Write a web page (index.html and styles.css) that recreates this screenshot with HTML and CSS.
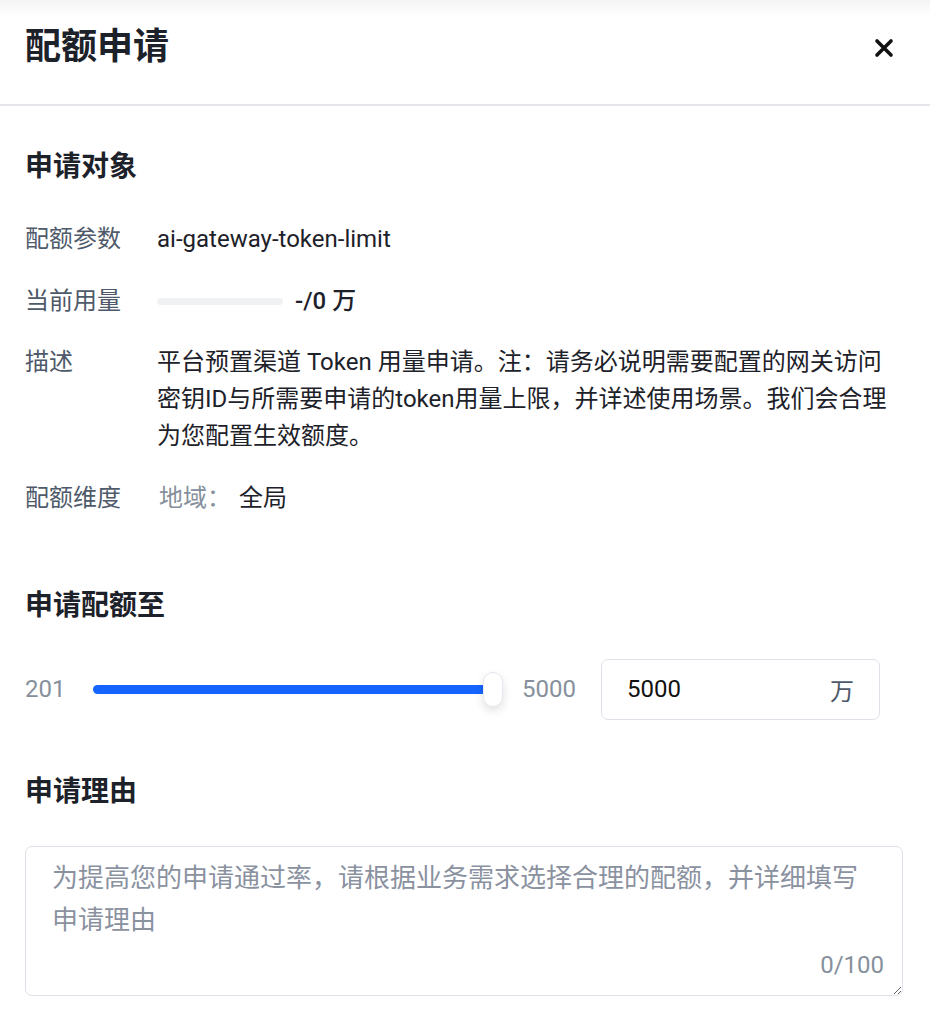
FILE: index.html
```html
<!DOCTYPE html>
<html lang="zh-CN">
<head>
<meta charset="utf-8">
<title>配额申请</title>
<link rel="stylesheet" href="styles.css">
</head>
<body>
<div class="dialog">
  <header class="dialog-header">
    <h1 class="dialog-title">配额申请</h1>
    <button class="close-btn" aria-label="关闭">
      <svg width="20" height="20" viewBox="0 0 20 20"><path d="M3 3L17 17M17 3L3 17" stroke="#111" stroke-width="3.6" stroke-linecap="round"/></svg>
    </button>
  </header>
  <main class="dialog-body">
    <h2 class="section-title first">申请对象</h2>
    <div class="info-rows">
      <div class="info-row">
        <div class="info-label">配额参数</div>
        <div class="info-value">ai-gateway-token-limit</div>
      </div>
      <div class="info-row">
        <div class="info-label">当前用量</div>
        <div class="info-value usage">
          <span class="usage-bar"></span>
          <span class="usage-text">-/0 万</span>
        </div>
      </div>
      <div class="info-row">
        <div class="info-label">描述</div>
        <div class="info-value desc">平台预置渠道 Token 用量申请。注：请务必说明需要配置的网关访问密钥ID与所需要申请的token用量上限，并详述使用场景。我们会合理为您配置生效额度。</div>
      </div>
      <div class="info-row">
        <div class="info-label">配额维度</div>
        <div class="info-value"><span class="dim-key">地域：</span>全局</div>
      </div>
    </div>

    <h2 class="section-title second">申请配额至</h2>
    <div class="slider-row">
      <span class="slider-min">201</span>
      <div class="slider">
        <div class="slider-track"></div>
        <div class="slider-thumb"></div>
      </div>
      <span class="slider-max">5000</span>
      <div class="num-input">
        <span class="num-value">5000</span>
        <span class="num-unit">万</span>
      </div>
    </div>

    <h2 class="section-title third">申请理由</h2>
    <div class="textarea-wrap">
      <textarea class="reason" placeholder="为提高您的申请通过率，请根据业务需求选择合理的配额，并详细填写申请理由"></textarea>
      <span class="counter">0/100</span>
    </div>
  </main>
</div>
</body>
</html>
```

FILE: styles.css
```css
* { box-sizing: border-box; }
html, body {
  margin: 0;
  padding: 0;
  background: #fff;
}
body {
  font-family: Roboto, "Noto Sans CJK SC", sans-serif;
  color: #1d2129;
}
.dialog {
  width: 930px;
  min-height: 1018px;
  background: #fff;
}
.dialog-header {
  height: 106px;
  padding: 29px 25px 0 25px;
  display: flex;
  align-items: flex-start;
  justify-content: space-between;
  border-bottom: 2px solid #e5e6eb;
  background: linear-gradient(#f4f4f5 0px, #ffffff 16px);
}
.dialog-title {
  margin: 0;
  font-size: 36px;
  line-height: 36px;
  font-weight: 600;
  color: #1d2129;
}
.close-btn {
  border: 0;
  background: transparent;
  padding: 0;
  margin: 9px 11px 0 0;
  width: 20px;
  height: 20px;
  display: flex;
}
.dialog-body {
  padding: 0 27px 0 25px;
}
.section-title {
  margin: 0;
  font-size: 28px;
  line-height: 36px;
  font-weight: 600;
  color: #1d2129;
}
.section-title.first { margin-top: 43px; }
.section-title.second { margin-top: 71px; }
.section-title.third { margin-top: 54px; }

.info-rows {
  margin-top: 36px;
  display: flex;
  flex-direction: column;
  gap: 24.5px;
}
.info-row {
  display: flex;
  font-size: 24px;
  line-height: 37px;
}
.info-label {
  width: 132px;
  flex: none;
  color: #4e5969;
}
.info-value {
  flex: 1;
  color: #1d2129;
}
.info-value.desc {
  padding-right: 15px;
}
.usage {
  display: flex;
  align-items: center;
}
.usage-bar {
  width: 126px;
  height: 7px;
  border-radius: 4px;
  background: #f0f1f3;
  margin-right: 12px;
}
.usage-text {
  font-weight: 500;
}
.dim-key {
  color: #86909c;
  margin-left: 2px;
  margin-right: 8px;
}

.slider-row {
  margin-top: 35px;
  display: flex;
  align-items: center;
  height: 61px;
  font-size: 24px;
}
.slider-min {
  width: 68px;
  color: #86909c;
}
.slider {
  position: relative;
  width: 410px;
  height: 36px;
  display: flex;
  align-items: center;
}
.slider-track {
  width: 400px;
  height: 9px;
  border-radius: 5px;
  background: #1664ff;
}
.slider-thumb {
  position: absolute;
  right: 0;
  top: 1px;
  width: 20px;
  height: 35px;
  border-radius: 10px;
  background: #fff;
  border: 1px solid #e5e8ef;
  box-shadow: 0 4px 10px rgba(0, 0, 0, 0.12);
}
.slider-max {
  margin-left: 19px;
  color: #86909c;
}
.num-input {
  margin-left: 25px;
  width: 279px;
  height: 61px;
  border: 1.5px solid #dde1e8;
  border-radius: 7px;
  display: flex;
  align-items: center;
  justify-content: space-between;
  padding: 0 25px 0 25px;
}
.num-value {
  color: #111;
}
.num-unit {
  color: #4e5969;
}

.textarea-wrap {
  position: relative;
  margin-top: 36px;
  width: 878px;
  height: 150px;
}
.reason {
  display: block;
  width: 100%;
  height: 100%;
  border: 1.5px solid #dde1e8;
  border-radius: 7px;
  padding: 10px 26px 0 26px;
  font-family: Roboto, "Noto Sans CJK SC", sans-serif;
  font-size: 26px;
  line-height: 42px;
  color: #1d2129;
  outline: none;
  resize: both;
}
.reason::placeholder {
  color: #8a919f;
}
.counter {
  position: absolute;
  right: 19px;
  bottom: 19px;
  font-size: 24px;
  line-height: 24px;
  color: #86909c;
}
```
